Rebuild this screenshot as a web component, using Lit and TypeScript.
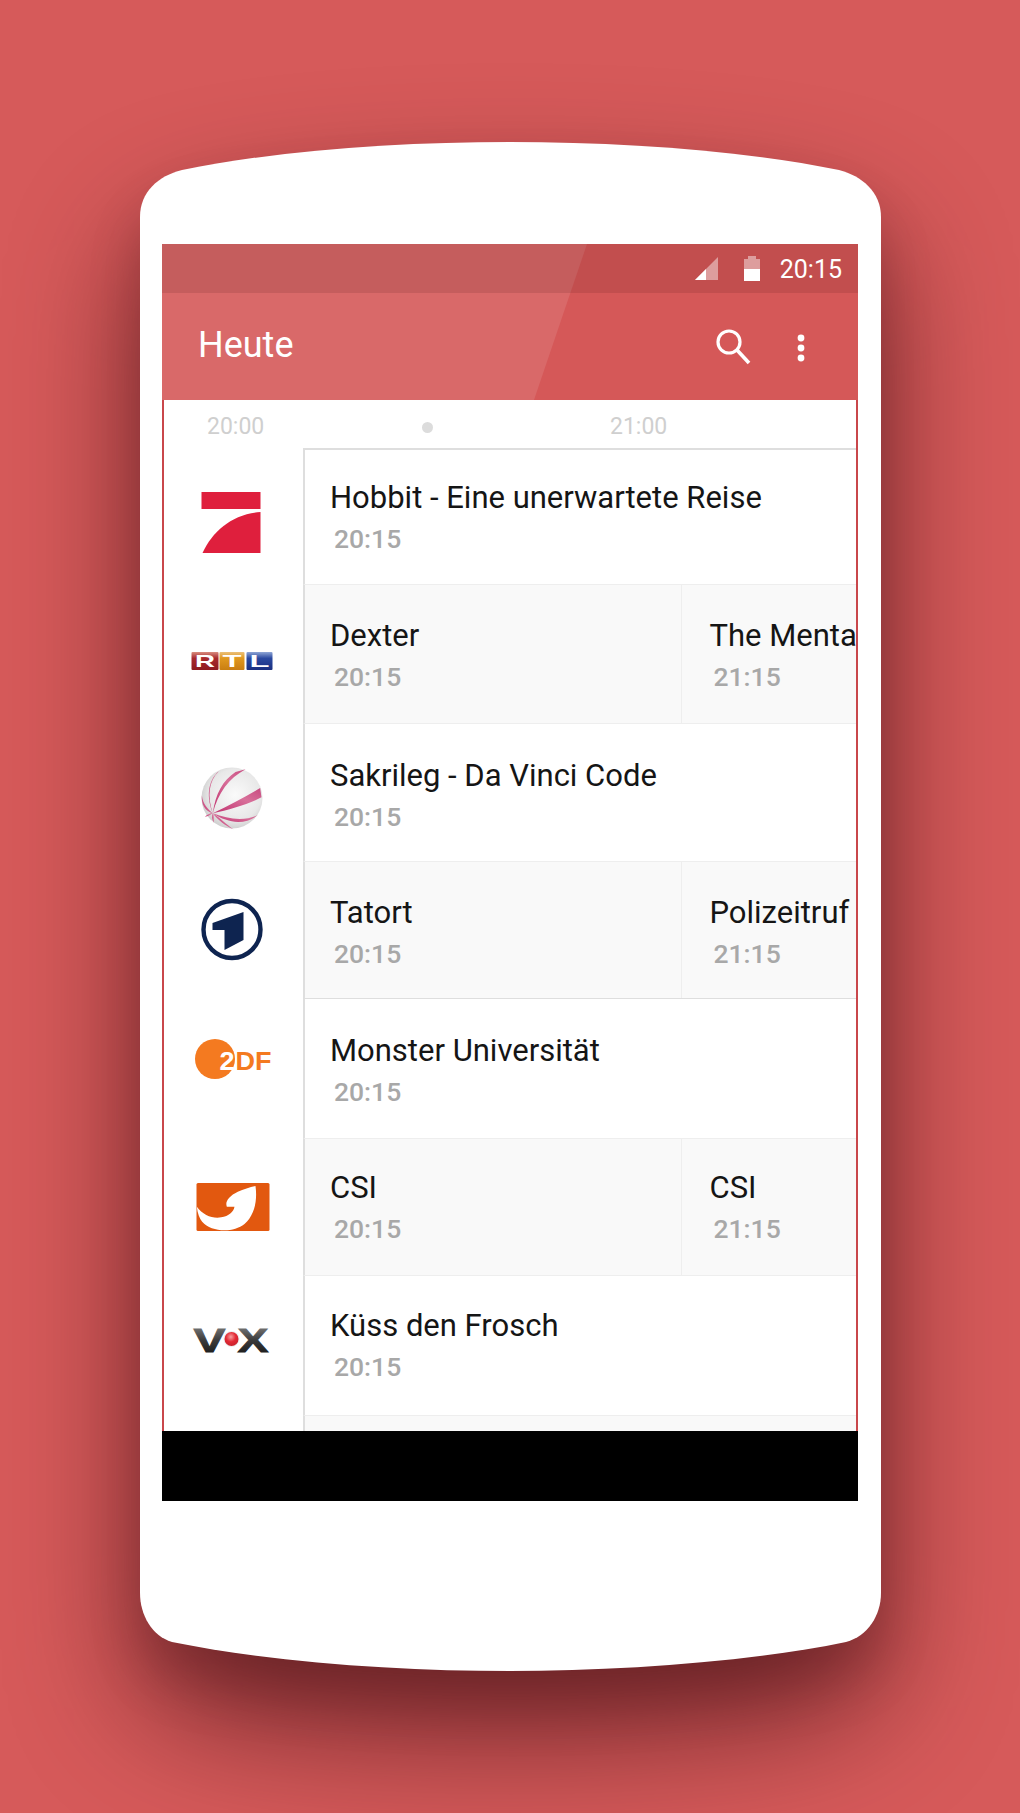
import { LitElement, html, css, svg } from "lit";
import { customElement } from "lit/decorators.js";

const LOGOS = [
  svg`<rect x="202" y="492" width="59" height="17" fill="#DF1F3D"/>
      <path d="M203 553C213 531 233 514 261 512V553Z" fill="#DF1F3D"/>`,
  svg`<defs>
        <linearGradient id="rtlr" x1="0" y1="0" x2="0" y2="1"><stop offset="0" stop-color="#D98C7E"/><stop offset=".35" stop-color="#A82A2E"/><stop offset="1" stop-color="#8E1A20"/></linearGradient>
        <linearGradient id="rtlo" x1="0" y1="0" x2="0" y2="1"><stop offset="0" stop-color="#EBC07A"/><stop offset=".35" stop-color="#E0981F"/><stop offset="1" stop-color="#C97E12"/></linearGradient>
        <linearGradient id="rtlb" x1="0" y1="0" x2="0" y2="1"><stop offset="0" stop-color="#8FA6D6"/><stop offset=".35" stop-color="#2A49A0"/><stop offset="1" stop-color="#1A2F80"/></linearGradient>
      </defs>
      <rect x="192" y="652" width="27" height="18" rx="1" fill="url(#rtlr)"/>
      <rect x="220" y="652" width="25" height="18" rx="1" fill="url(#rtlo)"/>
      <rect x="247" y="652" width="26" height="18" rx="1" fill="url(#rtlb)"/>
      <g class="rtl">
        <text x="205.5" y="667" text-anchor="middle" textLength="20" lengthAdjust="spacingAndGlyphs">R</text>
        <text x="232.5" y="667" text-anchor="middle" textLength="19" lengthAdjust="spacingAndGlyphs">T</text>
        <text x="260" y="667" text-anchor="middle" textLength="20" lengthAdjust="spacingAndGlyphs">L</text>
      </g>`,
  svg`<defs>
        <radialGradient id="sat" cx=".55" cy=".45" r=".6"><stop offset="0" stop-color="#FAFAFA"/><stop offset=".7" stop-color="#E8E8E8"/><stop offset="1" stop-color="#C9C9C9"/></radialGradient>
        <linearGradient id="band" x1="0" y1="1" x2="1" y2="0"><stop offset="0" stop-color="#C0306E"/><stop offset=".6" stop-color="#D8709A"/><stop offset="1" stop-color="#C84A80"/></linearGradient>
      </defs>
      <circle cx="232.5" cy="798" r="30.5" fill="url(#sat)"/>
      <g transform="translate(170 750) scale(.3333)" fill="url(#band)">
        <path d="M130 190C145 130 178 85 228 58L198 66C160 92 138 130 130 190Z"/>
        <path d="M130 190C180 180 240 162 276 142L272 114C230 140 180 165 130 190Z"/>
        <path d="M130 190C112 140 118 92 148 64C122 84 106 130 130 190Z"/>
        <path d="M130 190C175 220 225 226 264 196C225 214 175 208 130 190Z"/>
        <path d="M130 190C115 178 100 162 97 136C95 162 106 184 130 190Z"/>
        <path d="M130 190C150 202 170 224 192 238C168 228 144 210 130 190Z"/>
        <path d="M130 190C133 198 133 206 133 218C127 208 126 198 130 190Z"/>
        <path d="M130 190C122 194 116 200 106 200C114 194 122 189 130 190Z"/>
      </g>`,
  svg`<circle cx="232.5" cy="929.5" r="28.5" fill="#fff" stroke="#0E2450" stroke-width="4.4"/>
      <path d="M213 923L244 912V940L225 950V930H213Z" fill="#0E2450"/>`,
  svg`<circle cx="215.5" cy="1059" r="20" fill="#F47A20"/>
      <g class="zdf">
        <text x="220" y="1070" class="two" textLength="15" lengthAdjust="spacingAndGlyphs">2</text>
        <text x="236" y="1070" textLength="36" lengthAdjust="spacingAndGlyphs">DF</text>
      </g>`,
  svg`<rect x="197" y="1183" width="73" height="48" rx="1.5" fill="#E2580F"/>
      <g transform="translate(170 1160) scale(.3333)">
        <path d="M82 140C100 165 130 177 155 172C178 168 192 156 195 140L172 140C166 125 178 108 205 95C222 88 240 82 258 78C264 120 256 165 225 192C190 220 125 216 98 185C90 175 84 160 82 140Z" fill="#fff"/>
      </g>`,
  svg`<defs><linearGradient id="vox" x1="0" y1="0" x2="0" y2="1"><stop offset="0" stop-color="#8A8A8A"/><stop offset=".5" stop-color="#3A3A3A"/><stop offset="1" stop-color="#111"/></linearGradient>
      <radialGradient id="voxd" cx=".45" cy=".35" r=".7"><stop offset="0" stop-color="#F7A0A0"/><stop offset=".5" stop-color="#E32A35"/><stop offset="1" stop-color="#C5202A"/></radialGradient></defs>
      <g class="vox">
        <text x="194" y="1352" textLength="32" lengthAdjust="spacingAndGlyphs">V</text>
        <text x="238" y="1352" textLength="31" lengthAdjust="spacingAndGlyphs">X</text>
      </g>
      <circle cx="232" cy="1339" r="8" fill="#eee"/>
      <circle cx="232" cy="1339" r="7" fill="url(#voxd)"/>`,
  svg``,
];

type Cell = { title: string; time: string };
type Row = { top: number; h: number; pad: number; alt: boolean; strong?: boolean; cells: Cell[] };

const ROWS: Row[] = [
  { top: 448, h: 137, pad: 28, alt: false, cells: [{ title: "Hobbit - Eine unerwartete Reise", time: "20:15" }] },
  { top: 585, h: 139, pad: 30.5, alt: true, cells: [{ title: "Dexter", time: "20:15" }, { title: "The Mental", time: "21:15" }] },
  { top: 724, h: 138, pad: 32, alt: false, cells: [{ title: "Sakrileg - Da Vinci Code", time: "20:15" }] },
  { top: 862, h: 137, pad: 31, alt: true, strong: true, cells: [{ title: "Tatort", time: "20:15" }, { title: "Polizeitruf", time: "21:15" }] },
  { top: 999, h: 140, pad: 32, alt: false, cells: [{ title: "Monster Universität", time: "20:15" }] },
  { top: 1139, h: 137, pad: 29, alt: true, cells: [{ title: "CSI", time: "20:15" }, { title: "CSI", time: "21:15" }] },
  { top: 1276, h: 140, pad: 30, alt: false, cells: [{ title: "Küss den Frosch", time: "20:15" }] },
  { top: 1416, h: 15, pad: 0, alt: true, cells: [] },
];

@customElement("app-root")
export class AppRoot extends LitElement {
  static styles = css`
    :host { display: block; width: 1020px; height: 1813px; overflow: hidden; position: relative; background: #d65a5a; font-family: Roboto, "Liberation Sans", sans-serif; }
    .shell { position: absolute; inset: 0; width: 1020px; height: 1813px; }
    .stage { position: relative; padding: 244px 0 0 162px; }
    .screen { width: 696px; height: 1257px; background: #fff; display: flex; flex-direction: column; overflow: hidden; }
    .head { position: relative; height: 156px; flex: none; color: #fff; background: #d55858; }
    .sheen { position: absolute; inset: 0; background: rgba(255, 255, 255, 0.1); clip-path: polygon(0 0, 425px 0, 372px 100%, 0 100%); }
    .status { position: relative; height: 49px; background: rgba(90, 25, 30, 0.15); display: flex; align-items: center; justify-content: flex-end; padding-right: 16px; box-sizing: border-box; }
    .status svg { display: block; }
    .signal { margin-right: 26px; }
    .battery { margin-right: 20px; }
    .clock { font-size: 25px; font-weight: 400; line-height: 30px; margin-top: 2px; }
    .bar { position: relative; height: 107px; display: flex; align-items: center; padding-left: 36px; }
    .heading { font-size: 36px; line-height: 40px; flex: 1; margin-top: -3px; }
    .actions { display: block; margin-right: 40px; }
    .body { flex: 1; border-left: 2.5px solid #c9474b; border-right: 2.5px solid #c9474b; min-height: 0; display: flex; flex-direction: column; overflow: hidden; }
    .ruler { height: 48px; flex: none; position: relative; display: flex; align-items: center; font-size: 23px; color: #cfcfcf; padding: 6px 0 0 43px; box-sizing: border-box; line-height: 42px; }
    .tick { width: 57px; }
    .dot { width: 11px; height: 11px; border-radius: 50%; background: #dcdcdc; margin: 0 177px 0 158px; }
    .row { display: flex; flex: none; box-sizing: border-box; }
    .logo { width: 139px; flex: none; display: block; }
    .rtl text { font: 900 17px "Liberation Sans", sans-serif; fill: #fff; }
    .zdf text { font: 700 25px "Liberation Sans", sans-serif; fill: #F47A20; }
    .zdf .two { fill: #fff; }
    .vox text { font: 900 33px "Liberation Sans", sans-serif; fill: url(#vox); stroke: url(#vox); stroke-width: 0.8px; }
    .content { flex: 1; min-width: 0; display: flex; overflow: hidden; border-left: 2.5px solid #dedede; border-bottom: 1.5px solid #eee; box-sizing: border-box; }
    .first .content { border-top: 2px solid #dedede; }
    .alt .content { background: #f9f9f9; }
    .strong .content { border-bottom-color: #dedede; }
    .last .content { border-bottom: 0; }
    .cell { box-sizing: border-box; flex: none; width: 376px; padding-left: 25px; white-space: nowrap; overflow: hidden; }
    .cell:only-child { flex: 1; width: auto; }
    .cell + .cell { flex: 1; width: auto; border-left: 1.5px solid #eee; padding-left: 27.5px; }
    .title { font-size: 31px; line-height: 40px; color: #151515; }
    .time { font-size: 26.5px; font-weight: 500; line-height: 42px; color: #a8a8a8; padding-left: 4px; }
    .nav { height: 70px; flex: none; background: #000; }
  `;

  render() {
    const phone =
      "M140 217C140 192 158 176 182 170C280 150 400 142 510 142C620 142 740 150 839 170C862 176 881 192 881 217V1593C881 1615 868 1636 846 1642C750 1662 620 1671 510 1671C400 1671 270 1662 172 1642C152 1636 140 1615 140 1593Z";
    return html`
      <svg class="shell" viewBox="0 0 1020 1813" aria-hidden="true">
        <defs>
          <filter id="b1" filterUnits="userSpaceOnUse" x="-300" y="-300" width="1620" height="2500" color-interpolation-filters="sRGB"><feGaussianBlur stdDeviation="66"/></filter>
          <filter id="b2" filterUnits="userSpaceOnUse" x="-300" y="-300" width="1620" height="2500" color-interpolation-filters="sRGB"><feGaussianBlur stdDeviation="26"/></filter>
        </defs>
        <path d=${phone} fill="#3a0a10" opacity=".64" filter="url(#b1)" transform="translate(0 66)"/>
        <path d=${phone} fill="#3a0a10" opacity=".2" filter="url(#b2)" transform="translate(0 36)"/>
        <path d=${phone} fill="#fff"/>
      </svg>
      <div class="stage">
        <div class="screen">
          <header class="head">
            <div class="sheen"></div>
            <div class="status">
              <svg class="signal" width="23" height="23" viewBox="0 0 23 23"><path d="M23 0V23H0Z" fill="#fff" opacity=".45"/><path d="M11 12V23H0Z" fill="#fff"/></svg>
              <svg class="battery" width="16" height="25" viewBox="0 0 16 25"><path d="M0 3H4V0H12V3H16V13H0Z" fill="#fff" opacity=".45"/><rect y="13" width="16" height="12" fill="#fff"/></svg>
              <span class="clock">20:15</span>
            </div>
            <div class="bar">
              <span class="heading">Heute</span>
              <svg class="actions" width="120" height="50" viewBox="0 0 120 50">
                <circle cx="31" cy="20" r="11" fill="none" stroke="#fff" stroke-width="3.2"/>
                <path d="M39 28L51 41" stroke="#fff" stroke-width="3.6" fill="none"/>
                <circle cx="103" cy="16" r="3.4" fill="#fff"/><circle cx="103" cy="26" r="3.4" fill="#fff"/><circle cx="103" cy="36" r="3.4" fill="#fff"/>
              </svg>
            </div>
          </header>
          <div class="body">
            <div class="ruler"><span class="tick">20:00</span><span class="dot"></span><span class="tick">21:00</span></div>
            ${ROWS.map((r, i) => html`
              <div class="row ${r.alt ? "alt" : ""} ${r.strong ? "strong" : ""} ${i === 0 ? "first" : ""} ${i === ROWS.length - 1 ? "last" : ""}" style="height:${r.h}px">
                <svg class="logo" width="139" height=${r.h} viewBox="164.5 ${r.top} 139 ${r.h}">${LOGOS[i]}</svg>
                <div class="content">
                  ${r.cells.map((c) => html`
                    <div class="cell" style="padding-top:${r.pad}px">
                      <div class="title">${c.title}</div>
                      <div class="time">${c.time}</div>
                    </div>`)}
                </div>
              </div>`)}
          </div>
          <div class="nav"></div>
        </div>
      </div>
    `;
  }
}
